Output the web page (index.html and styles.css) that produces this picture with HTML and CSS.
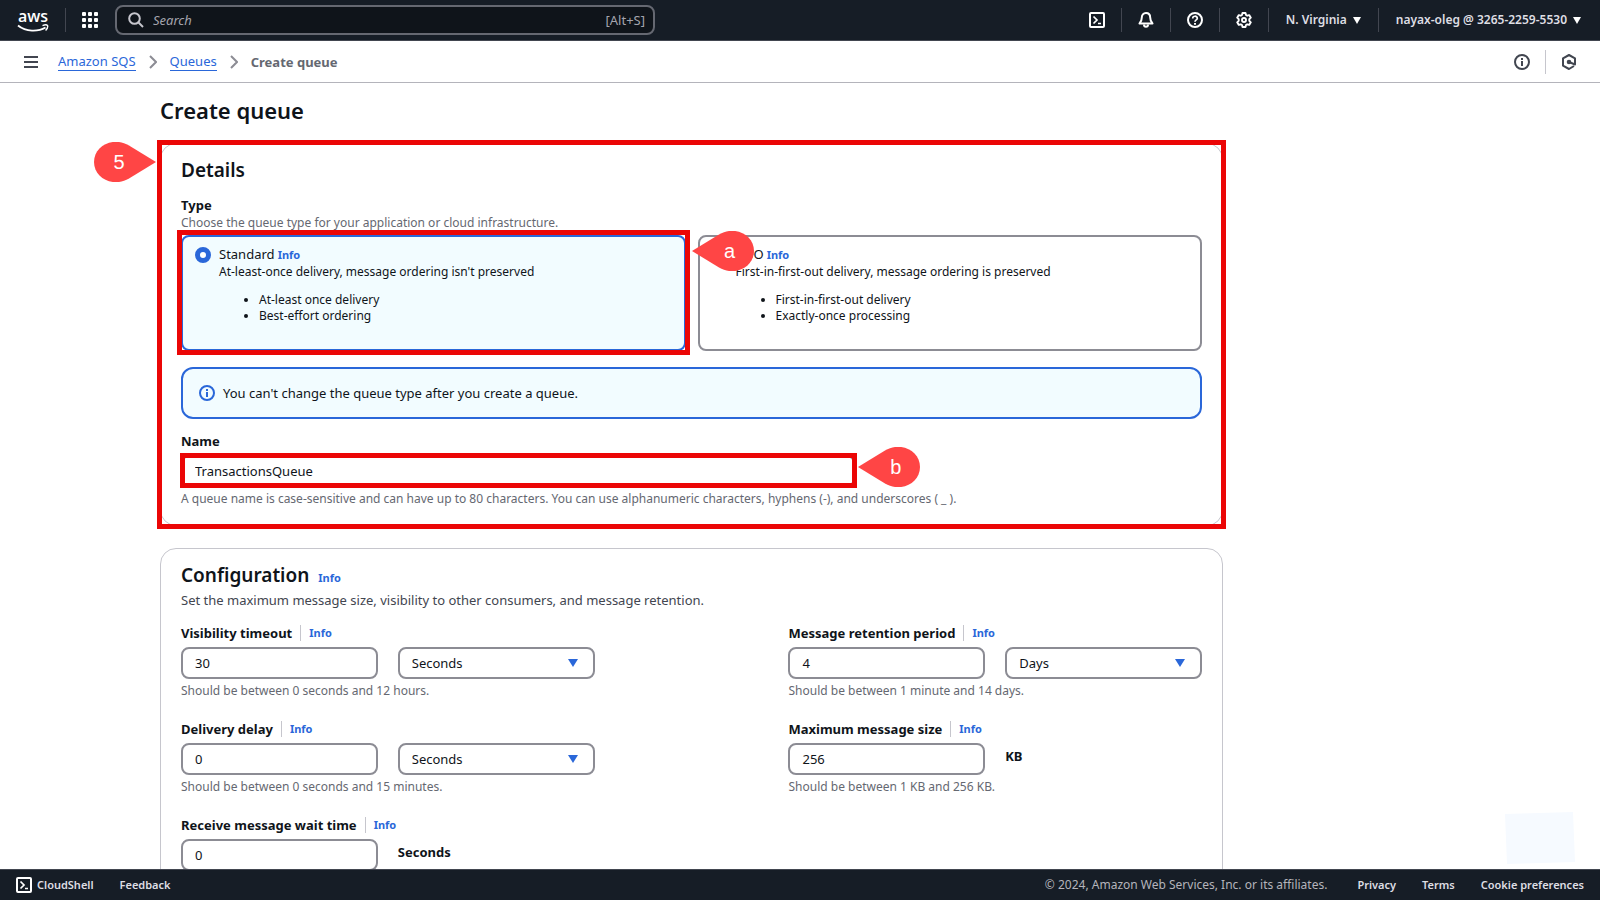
FILE: index.html
```html
<!DOCTYPE html>
<html lang="en">

<head>
    <meta charset="UTF-8">
    <meta name="viewport" content="width=device-width, initial-scale=1.0">
    <title>Create queue | Amazon SQS</title>
    <link rel="stylesheet" href="styles.css">
</head>

<body>

    <header class="topnav">
        <a class="logo" href="#" aria-label="AWS">
            <span>aws</span>
            <svg width="32" height="8" viewBox="0 0 32 8" fill="none">
                <path d="M1 1.500C9 8 21 8 28.500 3.500" stroke="#fff" stroke-width="1.800" />
                <path d="M25.500 1.600C27.500 .8 29.800 .7 30.500 1.400C31 2.600 30 5 28.600 6.400" stroke="#fff" stroke-width="1.400" />
            </svg>
        </a>
        <span class="divider"></span>
        <button class="icon-btn" aria-label="Services">
            <svg width="16" height="16" viewBox="0 0 16 16" fill="#fff">
                <rect x="0" y="0" width="4" height="4" rx="1" /><rect x="6" y="0" width="4" height="4" rx="1" /><rect x="12" y="0" width="4" height="4" rx="1" />
                <rect x="0" y="6" width="4" height="4" rx="1" /><rect x="6" y="6" width="4" height="4" rx="1" /><rect x="12" y="6" width="4" height="4" rx="1" />
                <rect x="0" y="12" width="4" height="4" rx="1" /><rect x="6" y="12" width="4" height="4" rx="1" /><rect x="12" y="12" width="4" height="4" rx="1" />
            </svg>
        </button>
        <label class="search">
            <svg width="16" height="16" viewBox="0 0 16 16" fill="none" stroke="#c6c6cd" stroke-width="2">
                <circle cx="6.500" cy="6.500" r="5.300" />
                <path d="M10.500 10.500L15 15" />
            </svg>
            <input type="text" placeholder="Search" aria-label="Search">
            <span>[Alt+S]</span>
        </label>

        <nav class="tools">
            <button class="icon-btn" aria-label="CloudShell">
                <svg width="16" height="16" viewBox="0 0 16 16" fill="none" stroke="#fff" stroke-width="2">
                    <rect x="1" y="1" width="14" height="14" rx="1" />
                    <path d="M4.500 4.500L8 8L4.500 11.500M9 11.500H12" stroke-width="1.700" />
                </svg>
            </button>
            <span class="divider"></span>
            <button class="icon-btn" aria-label="Notifications">
                <svg width="16" height="16" viewBox="0 0 16 16" fill="none" stroke="#fff" stroke-width="2" stroke-linejoin="round">
                    <path d="M8 1C5.300 1 3.800 3 3.800 5.500C3.800 8.500 3 10 1.500 11.500H14.500C13 10 12.200 8.500 12.200 5.500C12.200 3 10.700 1 8 1Z" />
                    <path d="M6 12.500C6 15.500 10 15.500 10 12.500" />
                </svg>
            </button>
            <span class="divider"></span>
            <button class="icon-btn" aria-label="Help">
                <svg width="16" height="16" viewBox="0 0 16 16" fill="none" stroke="#fff" stroke-width="2">
                    <circle cx="8" cy="8" r="7" />
                    <path d="M5.700 6.500C5.700 3.500 10.300 3.500 10.300 6.300C10.300 8 8 7.800 8 9.800" stroke-width="1.700" />
                    <path d="M8 10.900V12.700" />
                </svg>
            </button>
            <span class="divider"></span>
            <button class="icon-btn" aria-label="Settings">
                <svg width="16" height="16" viewBox="0 0 16 16" fill="none" stroke="#fff" stroke-width="1.900" stroke-linejoin="round">
                    <path d="M6.500 1H9.500L10 3L11.200 3.700L13.200 3.100L14.800 5.700L13.300 7.200V8.800L14.800 10.300L13.200 12.900L11.200 12.300L10 13L9.500 15H6.500L6 13L4.800 12.300L2.800 12.900L1.200 10.300L2.700 8.800V7.200L1.200 5.700L2.800 3.100L4.800 3.700L6 3Z" />
                    <circle cx="8" cy="8" r="2" />
                </svg>
            </button>
            <span class="divider"></span>
            <button class="menu-btn">N. Virginia <svg width="8" height="7" viewBox="0 0 8 7"><path d="M0 0H8L4 7Z" fill="#fff" /></svg></button>
            <span class="divider"></span>
            <button class="menu-btn">nayax-oleg @ 3265-2259-5530 <svg width="8" height="7" viewBox="0 0 8 7"><path d="M0 0H8L4 7Z" fill="#fff" /></svg></button>
        </nav>
    </header>

    <div class="subnav">
        <button class="icon-btn" aria-label="Open navigation">
            <svg width="14" height="12" viewBox="0 0 14 12" fill="#424650">
                <rect width="14" height="2" /><rect y="5" width="14" height="2" /><rect y="10" width="14" height="2" />
            </svg>
        </button>
        <nav class="breadcrumbs" aria-label="Breadcrumbs">
            <a href="#">Amazon SQS</a>
            <svg width="8" height="14" viewBox="0 0 8 14" fill="none" stroke="#8c8c94" stroke-width="2"><path d="M1 1L7 7L1 13" /></svg>
            <a href="#">Queues</a>
            <svg width="8" height="14" viewBox="0 0 8 14" fill="none" stroke="#8c8c94" stroke-width="2"><path d="M1 1L7 7L1 13" /></svg>
            <span>Create queue</span>
        </nav>
        <div class="panels">
            <button class="icon-btn" aria-label="Info">
                <svg width="16" height="16" viewBox="0 0 16 16" fill="none" stroke="#424650" stroke-width="2">
                    <circle cx="8" cy="8" r="7" /><path d="M8 4V6M8 7V12" />
                </svg>
            </button>
            <span class="divider"></span>
            <button class="icon-btn" aria-label="Diagnostics">
                <svg width="16" height="16" viewBox="0 0 16 16" fill="none" stroke="#424650" stroke-width="2" stroke-linejoin="round">
                    <path d="M13 12L8 15L2 11.700V4.300L8 1L14 4.300V10.500L8 8" />
                    <circle cx="8" cy="8" r="1.300" fill="#424650" />
                </svg>
            </button>
        </div>
    </div>

    <main class="content">
        <h1>Create queue</h1>

        <section class="card details">
            <h2>Details</h2>

            <div class="field type-field">
                <span class="label">Type</span>
                <p class="hint">Choose the queue type for your application or cloud infrastructure.</p>
                <div class="tiles">
                    <div class="tile selected">
                        <input type="radio" name="type" id="standard" checked>
                        <div>
                            <div class="tile-title"><label for="standard">Standard</label> <a class="info" href="#">Info</a></div>
                            <p>At-least-once delivery, message ordering isn't preserved</p>
                            <ul>
                                <li>At-least once delivery</li>
                                <li>Best-effort ordering</li>
                            </ul>
                        </div>
                        <span class="mark mark-tile"></span>
                    </div>
                    <div class="tile">
                        <input type="radio" name="type" id="fifo">
                        <div>
                            <div class="tile-title"><label for="fifo">FIFO</label> <a class="info" href="#">Info</a></div>
                            <p>First-in-first-out delivery, message ordering is preserved</p>
                            <ul>
                                <li>First-in-first-out delivery</li>
                                <li>Exactly-once processing</li>
                            </ul>
                        </div>
                        <span class="pin pin-a">
                            <svg width="62" height="40" viewBox="0 0 62 40"><path d="M0 20L27 3.500C43 -6 62 4 62 20S43 46 27 36.500Z" fill="#ff4545" /></svg>
                            <b>a</b>
                        </span>
                    </div>
                </div>
            </div>

            <div class="alert">
                <svg width="16" height="16" viewBox="0 0 16 16" fill="none" stroke="#2a67d9" stroke-width="2">
                    <circle cx="8" cy="8" r="7" /><path d="M8 4V6M8 7V12" />
                </svg>
                You can't change the queue type after you create a queue.
            </div>

            <div class="field">
                <label class="label" for="name">Name</label>
                <div class="name-row">
                    <input class="control" type="text" id="name" value="TransactionsQueue">
                    <span class="mark mark-name"></span>
                    <span class="pin pin-b">
                        <svg width="62" height="40" viewBox="0 0 62 40"><path d="M0 20L27 3.500C43 -6 62 4 62 20S43 46 27 36.500Z" fill="#ff4545" /></svg>
                        <b>b</b>
                    </span>
                </div>
                <p class="hint">A queue name is case-sensitive and can have up to 80 characters. You can use alphanumeric characters, hyphens (-), and underscores ( _ ).</p>
            </div>

            <span class="mark mark-card"></span>
            <span class="pin pin-5">
                <svg width="62" height="40" viewBox="0 0 62 40"><path d="M62 20L35 3.500C19 -6 0 4 0 20S19 46 35 36.500Z" fill="#ff4545" /></svg>
                <b>5</b>
            </span>
        </section>

        <section class="card config">
            <h2>Configuration <a class="info" href="#">Info</a></h2>
            <p class="description">Set the maximum message size, visibility to other consumers, and message retention.</p>

            <div class="columns">
                <div class="field">
                    <div class="label-row"><label class="label" for="visibility">Visibility timeout</label><a class="info" href="#">Info</a></div>
                    <div class="pair">
                        <input class="control" type="text" id="visibility" value="30">
                        <div class="select">
                            <select class="control" aria-label="Visibility timeout unit"><option>Seconds</option></select>
                            <svg width="10" height="8" viewBox="0 0 10 8"><path d="M0 0H10L5 8Z" fill="#2a67d9" /></svg>
                        </div>
                    </div>
                    <p class="hint">Should be between 0 seconds and 12 hours.</p>
                </div>
                <div class="field">
                    <div class="label-row"><label class="label" for="retention">Message retention period</label><a class="info" href="#">Info</a></div>
                    <div class="pair">
                        <input class="control" type="text" id="retention" value="4">
                        <div class="select">
                            <select class="control" aria-label="Message retention unit"><option>Days</option></select>
                            <svg width="10" height="8" viewBox="0 0 10 8"><path d="M0 0H10L5 8Z" fill="#2a67d9" /></svg>
                        </div>
                    </div>
                    <p class="hint">Should be between 1 minute and 14 days.</p>
                </div>
                <div class="field">
                    <div class="label-row"><label class="label" for="delay">Delivery delay</label><a class="info" href="#">Info</a></div>
                    <div class="pair">
                        <input class="control" type="text" id="delay" value="0">
                        <div class="select">
                            <select class="control" aria-label="Delivery delay unit"><option>Seconds</option></select>
                            <svg width="10" height="8" viewBox="0 0 10 8"><path d="M0 0H10L5 8Z" fill="#2a67d9" /></svg>
                        </div>
                    </div>
                    <p class="hint">Should be between 0 seconds and 15 minutes.</p>
                </div>
                <div class="field">
                    <div class="label-row"><label class="label" for="size">Maximum message size</label><a class="info" href="#">Info</a></div>
                    <div class="pair">
                        <input class="control" type="text" id="size" value="256">
                        <span class="unit">KB</span>
                    </div>
                    <p class="hint">Should be between 1 KB and 256 KB.</p>
                </div>
                <div class="field">
                    <div class="label-row"><label class="label" for="wait">Receive message wait time</label><a class="info" href="#">Info</a></div>
                    <div class="pair">
                        <input class="control" type="text" id="wait" value="0">
                        <span class="unit">Seconds</span>
                    </div>
                </div>
            </div>
        </section>
    </main>

    <svg class="corner-shape" width="70" height="52" viewBox="0 0 70 52"><path d="M0 2L68 0L70 50L2 52Z" fill="#f6faff" /></svg>

    <footer class="footer">
        <button class="shell-btn">
            <svg width="16" height="16" viewBox="0 0 16 16" fill="none" stroke="#fff" stroke-width="2">
                <rect x="1" y="1" width="14" height="14" rx="1" />
                <path d="M4.500 4.500L8 8L4.500 11.500M9 11.500H12" stroke-width="1.700" />
            </svg>
            CloudShell
        </button>
        <a href="#">Feedback</a>
        <span class="copyright">© 2024, Amazon Web Services, Inc. or its affiliates.</span>
        <a href="#">Privacy</a>
        <a href="#">Terms</a>
        <a href="#">Cookie preferences</a>
    </footer>

</body>

</html>
```
FILE: styles.css
```css
* {
    margin: 0;
    box-sizing: border-box;
}

body {
    display: flex;
    flex-direction: column;
    height: 100vh;
    background-color: #fff;
    color: #0f141a;
    font-family: "Noto Sans", "Open Sans", sans-serif;
    font-size: 13px;
    line-height: 20px;
}

button,
input,
select {
    font: inherit;
    color: inherit;
}

button {
    background: none;
    border: none;
    padding: 0;
    cursor: pointer;
}

a {
    color: #2a67d9;
    text-decoration: none;
}

svg {
    display: block;
    flex-shrink: 0;
}

h2 {
    font-size: 19px;
    font-weight: 600;
    line-height: 24px;
}

/* top bar */
.topnav {
    display: flex;
    flex-shrink: 0;
    align-items: center;
    height: 41px;
    padding: 0 18px 0 17px;
    gap: 16px;
    background-color: #161d26;
    border-bottom: 1px solid #424650;
    color: #dedee3;
}

.logo {
    display: flex;
    flex-direction: column;
    align-items: center;
    width: 32px;
    color: #fff;
    font-family: "Open Sans", sans-serif;
    font-size: 16px;
    font-weight: 600;
    line-height: 16px;
}

.divider {
    width: 1px;
    height: 24px;
    background-color: #424650;
}

.search {
    display: flex;
    align-items: center;
    flex: 0 1 540px;
    height: 30px;
    margin-left: 1px;
    padding: 0 8px 0 11px;
    gap: 9px;
    background-color: #0f141a;
    border: 2px solid #656871;
    border-radius: 8px;
    color: #a4a4ad;
}

.search input {
    flex: 1;
    min-width: 0;
    padding: 0;
    background: none;
    border: none;
    outline: none;
}

.search input::placeholder {
    color: #a4a4ad;
    font-style: italic;
    opacity: 1;
}

.tools {
    display: flex;
    align-items: center;
    margin-left: auto;
    gap: 16px;
}

.menu-btn {
    display: flex;
    align-items: center;
    padding: 0 1px;
    gap: 6px;
    font-size: 12px;
    font-weight: 600;
}

/* breadcrumb bar */
.subnav {
    display: flex;
    flex-shrink: 0;
    align-items: center;
    height: 42px;
    padding: 0 23px 0 24px;
    gap: 20px;
    border-bottom: 1px solid #b4b4bb;
}

.breadcrumbs {
    display: flex;
    align-items: center;
    gap: 13px;
    color: #656871;
    font-weight: 700;
}

.breadcrumbs a {
    border-bottom: 1px solid #2a67d9;
    line-height: 18px;
    font-weight: 400;
}

.panels {
    display: flex;
    align-items: center;
    margin-left: auto;
    gap: 15px;
}

.panels .divider {
    background-color: #c6c6cd;
}

/* page */
.content {
    flex: 1;
    min-height: 0;
    overflow-y: auto;
    scrollbar-width: none;
    padding: 12px 377px 20px 160px;
}

h1 {
    margin-bottom: 18px;
    font-size: 22px;
    font-weight: 600;
    line-height: 30px;
}

.card {
    position: relative;
    padding: 14px 20px 18px;
    border: 1px solid #c6c6cd;
    border-radius: 16px;
}

.details {
    margin-bottom: 22px;
}

.label {
    display: block;
    font-weight: 700;
}

.hint {
    color: #656871;
    font-size: 12px;
    line-height: 16px;
}

.info {
    font-size: 11px;
    font-weight: 700;
}

.type-field {
    margin-top: 13px;
}

.tiles {
    display: grid;
    grid-template-columns: 1fr 1fr;
    gap: 12px;
    margin-top: 4px;
}

.tile {
    position: relative;
    display: flex;
    min-height: 116px;
    padding: 8px 12px;
    gap: 8px;
    border: 2px solid #8c8c94;
    border-radius: 8px;
    font-size: 12px;
    line-height: 16px;
}

.tile.selected {
    background-color: #f2fcff;
    border-color: #2a67d9;
}

.tile input {
    appearance: none;
    flex-shrink: 0;
    width: 16px;
    height: 16px;
    margin: 2px 0;
    background-color: #fff;
    border: 1px solid #8c8c94;
    border-radius: 50%;
}

.tile input:checked {
    border: 5px solid #2a67d9;
}

.tile-title {
    line-height: 19px;
}

.tile-title label {
    font-size: 13px;
}

.tile ul {
    margin: 12px 0;
    padding-left: 40px;
}

.alert {
    display: flex;
    align-items: center;
    min-height: 52px;
    margin: 16px 0 12px;
    padding: 0 16px;
    gap: 8px;
    background-color: #f2fcff;
    border: 2px solid #2a67d9;
    border-radius: 12px;
}

.control {
    display: block;
    width: 100%;
    height: 32px;
    padding: 0 12px;
    background-color: #fff;
    border: 2px solid #8c8c94;
    border-radius: 8px;
}

.name-row {
    position: relative;
    width: 66%;
    margin: 4px 0;
}

/* callouts drawn over the form */
.mark {
    position: absolute;
    border: 5px solid #eb0606;
    pointer-events: none;
}

.mark-card {
    inset: -4px;
}

.mark-tile {
    inset: -7px -6px -6px;
}

.mark-name {
    inset: -2px -2px -1px -1px;
}

.pin {
    position: absolute;
    width: 62px;
    height: 40px;
    color: #fff;
}

.pin b {
    position: absolute;
    inset: 0 16px 0 30px;
    font-family: "Liberation Sans", Arial, sans-serif;
    font-size: 20px;
    font-weight: 400;
    line-height: 40px;
    text-align: center;
}

.pin-5 {
    top: -2px;
    left: -67px;
}

.pin-5 b {
    inset: 0 29px 0 17px;
}

.pin-a {
    top: -6px;
    left: -8px;
}

.pin-b {
    top: -8px;
    left: 100%;
    margin-left: 3px;
}

/* configuration */
.config h2 .info {
    margin-left: 4px;
}

.description {
    color: #424650;
}

.columns {
    display: grid;
    grid-template-columns: 1fr 1fr;
    column-gap: 19%;
    row-gap: 20px;
    margin-top: 13px;
}

.label-row {
    display: flex;
    align-items: center;
}

.label-row .info {
    margin-left: 8px;
    padding-left: 8px;
    border-left: 1px solid #c6c6cd;
    line-height: 16px;
}

.pair {
    display: grid;
    grid-template-columns: 1fr 1fr;
    gap: 20px;
    margin: 4px 0;
}

.select {
    position: relative;
}

.select select {
    appearance: none;
}

.select svg {
    position: absolute;
    top: 12px;
    right: 17px;
    pointer-events: none;
}

.unit {
    padding-top: 3px;
    font-weight: 700;
}

.corner-shape {
    position: fixed;
    right: 25px;
    bottom: 36px;
}

/* bottom bar */
.footer {
    display: flex;
    flex-shrink: 0;
    align-items: center;
    height: 31px;
    padding: 0 16px;
    gap: 26px;
    background-color: #161d26;
    border-top: 1px solid #424650;
    color: #dedee3;
    font-size: 11px;
    font-weight: 600;
}

.footer a {
    color: #dedee3;
}

.shell-btn {
    display: flex;
    align-items: center;
    gap: 5px;
}

.copyright {
    margin-left: auto;
    margin-right: 4px;
    color: #b4b4bb;
    font-size: 12px;
    font-weight: 400;
}
```
